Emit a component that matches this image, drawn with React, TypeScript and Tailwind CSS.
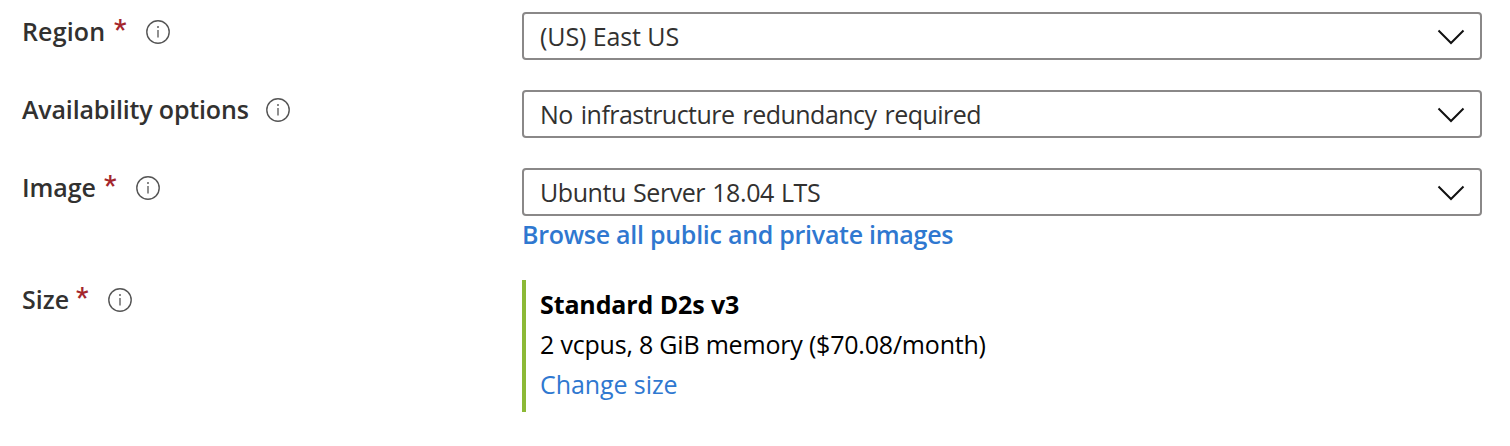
import React from "react";

function Info() {
  return (
    <svg className="h-6 w-6 shrink-0" viewBox="0 0 24 24" fill="none" stroke="#555555">
      <circle cx="12" cy="12" r="11.2" strokeWidth="1.4" />
      <path d="M12 10v7.5" strokeWidth="1.3" />
      <circle cx="12" cy="7" r="0.95" fill="#555555" stroke="none" />
    </svg>
  );
}

function Label({ text, width, spacing, required }: { text: string; width: string; spacing: string; required?: boolean }) {
  return (
    <div className="flex h-10 w-[500px] shrink-0 items-center text-[#323130]">
      <span className={`${width} ${spacing} -mt-0.5 whitespace-nowrap font-semibold`}>{text}</span>
      {required && <span className="-mt-1 w-8 font-['Roboto',sans-serif] text-[28px] font-medium text-[#a4262c]">*</span>}
      <Info />
    </div>
  );
}

function Select({ value, spacing }: { value: string; spacing: string }) {
  return (
    <div className="flex h-12 w-[960px] items-center justify-between rounded-[4px] border-2 border-[#8a8888] pr-[15px] pl-4 text-[#323130]">
      <span className={`${spacing} whitespace-nowrap`}>{value}</span>
      <svg className="mt-0.5 h-4 w-7" viewBox="0 0 28 16" fill="none" stroke="#111111" strokeWidth="2">
        <path d="M1.5 1.5 14 14 26.5 1.5" />
      </svg>
    </div>
  );
}

export default function App() {
  return (
    <main className="flex h-[446px] w-[1510px] flex-col bg-white pt-3 pl-[22px] font-['Open_Sans',sans-serif] text-[25px] leading-10">
      <section className="flex h-[78px]">
        <Label text="Region" width="w-[92px]" spacing="tracking-[0.15px]" required />
        <Select value="(US) East US" spacing="tracking-[-0.1px]" />
      </section>
      <section className="flex h-[78px]">
        <Label text="Availability options" width="w-[244px]" spacing="tracking-[-0.17px]" />
        <Select value="No infrastructure redundancy required" spacing="tracking-[-0.52px] [word-spacing:2px]" />
      </section>
      <section className="flex h-[112px]">
        <Label text="Image" width="w-[82px]" spacing="tracking-[-0.1px]" required />
        <div>
          <Select value="Ubuntu Server 18.04 LTS" spacing="tracking-[-0.42px] [word-spacing:1px]" />
          <a className="-mt-0.5 block whitespace-nowrap font-semibold tracking-[-0.27px] text-[#2f78d0]">Browse all public and private images</a>
        </div>
      </section>
      <section className="flex">
        <Label text="Size" width="w-[54px]" spacing="tracking-[0px]" required />
        <div className="h-[132px] border-l-4 border-[#8cb936] pt-1 pl-[14px] text-black">
          <div className="font-bold tracking-[-0.12px]">Standard D2s v3</div>
          <div className="tracking-[-0.2px]">2 vcpus, 8 GiB memory ($70.08/month)</div>
          <a className="block tracking-[-0.08px] text-[#2f78d0]">Change size</a>
        </div>
      </section>
    </main>
  );
}
